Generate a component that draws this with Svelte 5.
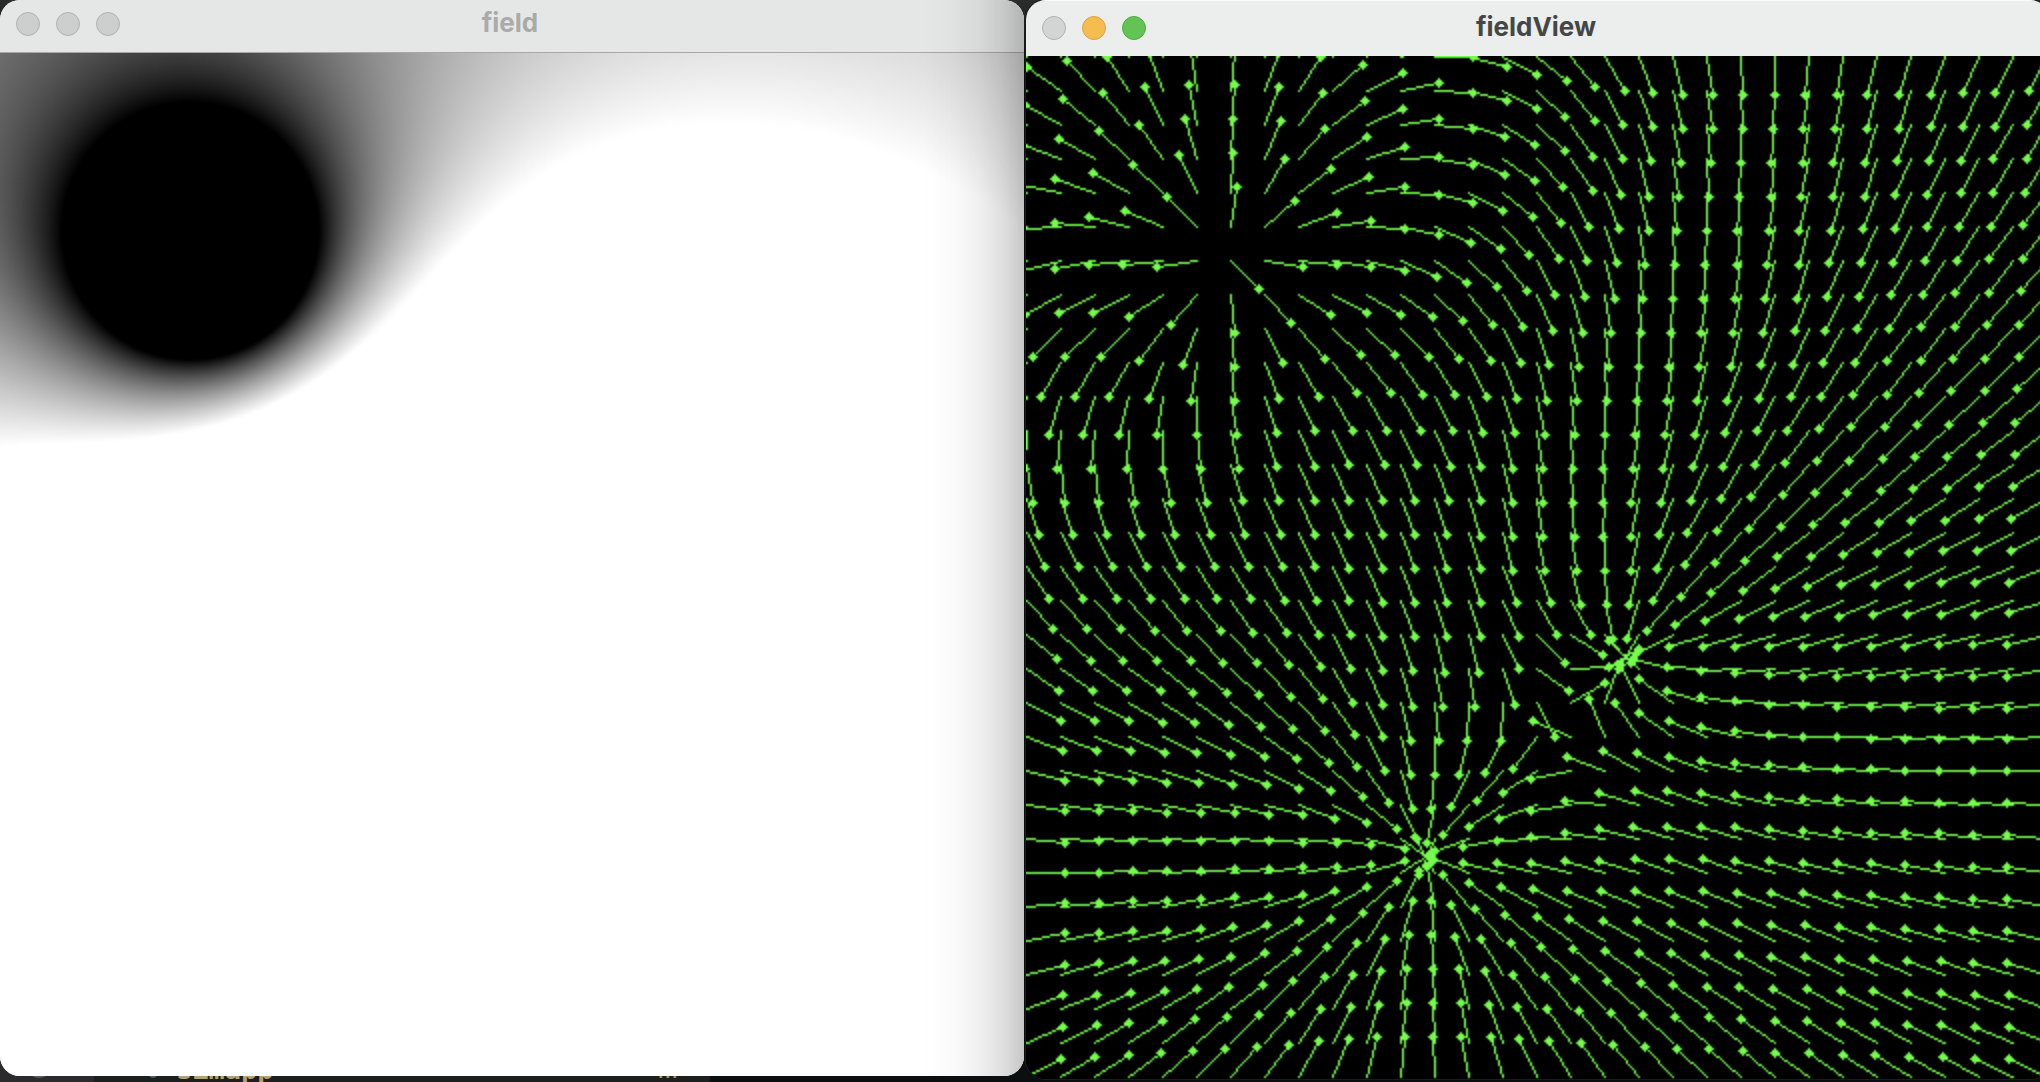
<script>
  import { onMount } from 'svelte';

  const SIZE = 512;
  const STEP = 17;
  const ARROW = 20;
  const GREEN = [117, 251, 76];
  const charges = [
    { x: 100, y: 100, q: -1 },
    { x: 300, y: 300, q: 1 },
    { x: 200, y: 400, q: 4 }
  ];

  let fieldCanvas;
  let viewCanvas;

  function potential(x, y) {
    let v = 0;
    for (const c of charges) v += c.q / (Math.hypot(x - c.x, y - c.y) || 0.5);
    return v;
  }

  // Potential as grey levels, clamped to 0..255
  function drawField(ctx) {
    const img = ctx.createImageData(SIZE, SIZE);
    for (let y = 0; y < SIZE; y++) {
      for (let x = 0; x < SIZE; x++) {
        const g = Math.max(0, Math.min(255, potential(x, y) * 25600));
        img.data.set([g, g, g, 255], (y * SIZE + x) * 4);
      }
    }
    ctx.putImageData(img, 0, 0);
  }

  // Fixed-length arrows along the forward difference of the potential,
  // each ending in a small diamond
  function drawArrows(ctx) {
    const img = ctx.createImageData(SIZE, SIZE);
    for (let i = 3; i < img.data.length; i += 4) img.data[i] = 255;
    const plot = (x, y) => {
      if (x < 0 || y < 0 || x >= SIZE || y >= SIZE) return;
      img.data.set(GREEN, (y * SIZE + x) * 4);
    };
    for (let gx = 0; gx < SIZE; gx += STEP) {
      for (let gy = 0; gy < SIZE; gy += STEP) {
        const v = potential(gx, gy);
        const fx = potential(gx + 1, gy) - v;
        const fy = potential(gx, gy + 1) - v;
        const m = Math.hypot(fx, fy);
        const tx = Math.floor(gx + (fx / m) * ARROW);
        const ty = Math.floor(gy + (fy / m) * ARROW);
        const n = Math.max(Math.abs(tx - gx), Math.abs(ty - gy));
        for (let i = 0; i <= n; i++) {
          plot(Math.round(gx + ((tx - gx) * i) / n), Math.round(gy + ((ty - gy) * i) / n));
        }
        for (let a = -2; a <= 2; a++) {
          for (let b = -2; b <= 2; b++) {
            if (Math.abs(a) + Math.abs(b) <= 2) plot(tx + a, ty + b);
          }
        }
      }
    }
    ctx.putImageData(img, 0, 0);
  }

  onMount(() => {
    drawField(fieldCanvas.getContext('2d'));
    drawArrows(viewCanvas.getContext('2d'));
  });
</script>

<main class="desktop">
  <div class="behind">
    <div class="gutter"><span class="knob"></span></div>
    <div class="editor"><span class="mark"></span><span class="file">simapp</span><span class="more">...</span></div>
  </div>
  <section class="window inactive">
    <header class="bar">
      <div class="lights"><i></i><i></i><i></i></div>
      <h1>field</h1>
    </header>
    <canvas bind:this={fieldCanvas} width="512" height="512"></canvas>
    <div class="shade"></div>
  </section>
  <section class="window active">
    <header class="bar">
      <div class="lights"><i></i><i class="amber"></i><i class="green"></i></div>
      <h1>fieldView</h1>
    </header>
    <canvas bind:this={viewCanvas} width="512" height="512"></canvas>
  </section>
</main>

<style>
  :global(body) { overflow: hidden; background: #0b0f10; }
  .desktop {
    position: relative;
    display: flex;
    gap: 2px;
    width: 2040px;
    height: 1082px;
    overflow: hidden;
    background: linear-gradient(#2c2c2d, #17191a 40px, #0b0f10 80px);
    font-family: Inter, "Liberation Sans", sans-serif;
  }
  .behind {
    position: absolute;
    inset: auto auto 0 0;
    display: flex;
    width: 710px;
    height: 32px;
    overflow: hidden;
    background: #1d1e1e;
  }
  .gutter { width: 94px; background: #2b2b2d; }
  .knob { display: block; width: 24px; height: 24px; margin: 4px 0 0 27px; border-radius: 50%; background: #59595b; }
  .editor { display: flex; flex: 1; }
  .mark { width: 8px; height: 8px; margin: 20px 0 0 55px; background: #46606c; border-radius: 50%; }
  .file { margin: 8px 0 0 19px; color: #b7a173; font: bold 27px/24px "DejaVu Sans Mono", monospace; }
  .more { margin: 7px 32px 0 auto; color: #a3936c; font: 27px/24px "Liberation Sans", sans-serif; letter-spacing: -0.5px; }
  .window {
    position: relative;
    flex: none;
    width: 1024px;
    overflow: hidden;
    border-radius: 20px;
  }
  .inactive { height: 1076px; background: #fff; }
  .active { height: 1079px; background: #000; box-shadow: 0 0 0 1px #1b1b1c; }
  .bar {
    position: relative;
    display: flex;
    align-items: center;
    box-sizing: border-box;
  }
  .inactive .bar { height: 53px; padding: 0 0 4px 16px; background: #e5e7e6; border-bottom: 1px solid #a4a8a6; }
  .active .bar { height: 56px; padding: 0 0 1px 16px; background: #eceeed; border-top: 1px solid #fafafa; }
  .lights { display: flex; gap: 16px; }
  .lights i {
    box-sizing: border-box;
    width: 24px;
    height: 24px;
    border: 1px solid #b0b1b1;
    border-radius: 50%;
    background: #cdcfce;
  }
  .active .lights i { background: #d3d5d4; }
  .active .lights i.amber { background: #f5bd4f; border-color: #dba144; }
  .active .lights i.green { background: #61c454; border-color: #52a842; }
  h1 {
    flex: 1;
    margin: -2px 124px 0 0;
    text-align: center;
    font-size: 26px;
    font-weight: 700;
    line-height: 30px;
    color: #a9abaa;
  }
  .active h1 { color: #454746; }
  canvas { display: block; width: 1024px; height: 1024px; }
  .shade {
    position: absolute;
    inset: 0 0 0 auto;
    width: 100px;
    background: linear-gradient(to right, transparent, rgb(0 0 0 / 0.02) 30%, rgb(0 0 0 / 0.06) 55%, rgb(0 0 0 / 0.12) 78%, rgb(0 0 0 / 0.22));
  }
</style>
